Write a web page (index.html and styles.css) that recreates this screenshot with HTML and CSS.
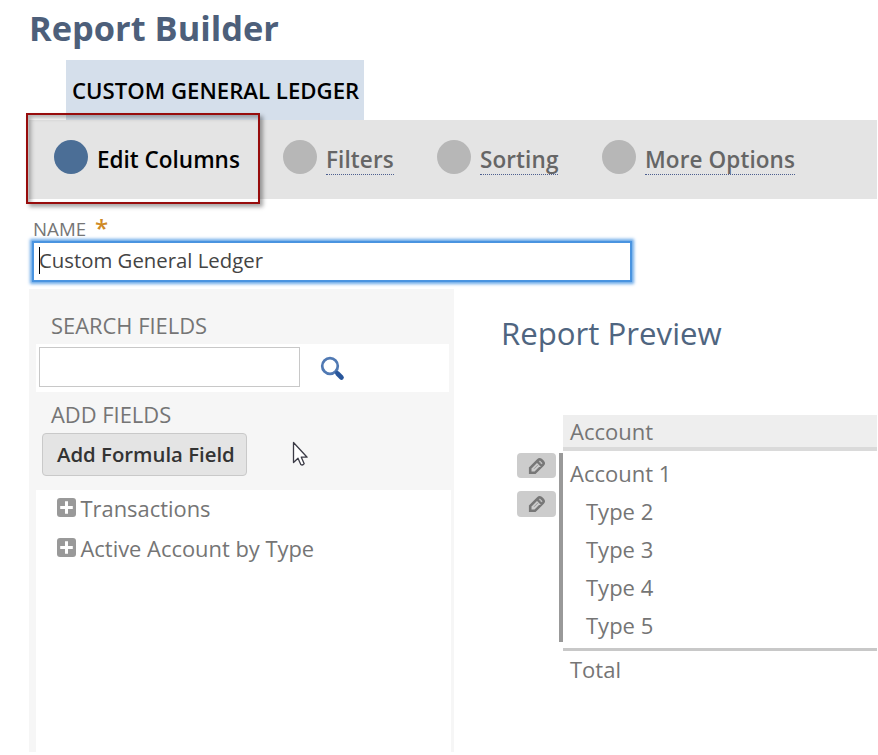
FILE: index.html
```html
<!DOCTYPE html>
<html lang="en">
<head>
<meta charset="utf-8">
<title>Report Builder</title>
<link rel="stylesheet" href="styles.css">
</head>
<body>
<svg class="defs" width="0" height="0">
  <symbol id="plus" viewBox="0 0 19 19"><rect width="19" height="19" rx="3" fill="#999"/><path d="M9.500 3.200v12.600M3.200 9.500h12.600" stroke="#fff" stroke-width="3"/></symbol>
  <symbol id="pencil" viewBox="0 0 18 18"><path d="M2.200 15.800v-4.800L10 3.200Q11.500 1.700 13 2.800L15.200 5Q16.300 6.300 14.900 7.900L7 15.800ZM9 4.200l4.900 4.900" fill="#ccc" stroke="#777" stroke-width="2.600"/><path d="M6 11.800l4-4M11.300 5l1.700 1.700" stroke="#999" stroke-width="1"/></symbol>
</svg>
<div class="page">
  <h1 class="title"><span>Report Builder</span></h1>
  <div class="tab"><span>CUSTOM GENERAL LEDGER</span></div>
  <nav class="steps">
    <div class="step active"><i></i><span>Edit Columns</span></div>
    <div class="step"><i></i><a>Filters</a></div>
    <div class="step"><i></i><a>Sorting</a></div>
    <div class="step"><i></i><a>More Options</a></div>
    <div class="callout"></div>
  </nav>
  <div class="name"><span>NAME</span><b>*</b></div>
  <div class="name-input"><span>Custom General Ledger</span></div>
  <main class="main">
    <section class="panel">
      <h3 class="search-label"><span>SEARCH FIELDS</span></h3>
      <div class="search">
        <div class="box"></div>
        <svg width="26" height="26" viewBox="0 0 26 26"><circle cx="10" cy="11" r="7.800" fill="#fff" stroke="#5079b3" stroke-width="2.700"/><path d="M15.500 16.500l1.500 1.500" stroke="#3d68a8" stroke-width="3"/><path d="M17.500 18.500l4 4" stroke="#28569b" stroke-width="4.600" stroke-linecap="round"/></svg>
      </div>
      <h3 class="add-label"><span>ADD FIELDS</span></h3>
      <div class="button"><span>Add Formula Field</span></div>
      <div class="list">
        <div class="item"><svg width="19" height="19"><use href="#plus"/></svg><span>Transactions</span></div>
        <div class="item"><svg width="19" height="19"><use href="#plus"/></svg><span>Active Account by Type</span></div>
      </div>
      <svg class="cursor" width="17" height="27" viewBox="0 0 17 27"><path d="M1.500 1.500v20l4.500-4.200 2.800 6.200q1.800 1.300 3.400-.8l-2.900-6.500h5.800Z" fill="#fff" stroke="#3b3b46" stroke-width="1.300" stroke-linejoin="round"/></svg>
    </section>
    <section class="preview">
      <h2><span>Report Preview</span></h2>
      <div class="grid">
        <div class="edits">
          <div class="edit"><svg width="18" height="18"><use href="#pencil"/></svg></div>
          <div class="edit second"><svg width="18" height="18"><use href="#pencil"/></svg></div>
        </div>
        <div class="rule"></div>
        <div class="table">
          <div class="head"><span>Account</span></div>
          <div class="row first"><span>Account 1</span></div>
          <div class="row type"><span>Type 2</span></div>
          <div class="row type"><span>Type 3</span></div>
          <div class="row type"><span>Type 4</span></div>
          <div class="row type"><span>Type 5</span></div>
          <div class="total"><span>Total</span></div>
        </div>
      </div>
    </section>
  </main>
</div>
</body>
</html>
```
FILE: styles.css
```css
* { box-sizing: border-box; }
body { margin: 0; background: #fff; font-family: "Open Sans", sans-serif; font-size: 22px; color: #757575; overflow: hidden; }
.defs { position: absolute; }
svg { display: block; flex: none; }
h1, h2, h3 { margin: 0; font-weight: 400; }
span, a { white-space: nowrap; }
.page { width: 877px; height: 752px; padding-left: 29px; overflow: hidden; }
.title { height: 60px; line-height: 56px; font-size: 34.400px; font-weight: 700; color: #4d5f7a; }
.tab { width: 298px; height: 60px; margin-left: 37px; padding-left: 6px; line-height: 61px; font-size: 22.200px; font-weight: 600; color: #000; background: #d5dfeb; }
.steps { position: relative; display: grid; grid-template-columns: 229px 154px 165px 1fr; height: 79px; padding: 20px 0 0 25px; background: #e4e4e4; }
.step { display: flex; align-items: flex-start; gap: 9px; font-size: 22.500px; font-weight: 600; color: #666; }
.step i { flex: none; width: 34px; height: 34px; border-radius: 50%; background: #b7b7b7; }
.step.active { color: #000; }
.step.active i { background: #4b6e96; }
.step span, .step a { margin-top: 3px; line-height: 33px; }
.step a { height: 32px; border-bottom: 1px dotted #4d5f8f; letter-spacing: .1px; }
.callout { position: absolute; left: -3px; top: -7px; width: 234px; height: 91px; border: 2px solid #970c0c; box-shadow: 3px 3px 4px rgba(0,0,0,.35), inset 3px 3px 4px rgba(0,0,0,.3); }
.name { display: flex; height: 42px; padding: 9px 0 0 4px; gap: 9px; line-height: 42px; font-size: 18.700px; }
.name b { font-size: 24px; font-weight: 600; line-height: 39px; color: #cf8a26; }
.name-input { width: 600px; height: 41px; margin-left: 3px; padding-left: 5px; border: 2px solid #4a94e0; box-shadow: 0 0 3px 2px #69a8e8; line-height: 35px; font-size: 20.350px; color: #444; }
.name-input::before { content: ""; display: inline-block; width: 1px; height: 27px; margin-right: -1px; vertical-align: -6px; background: #000; }
.main { display: flex; margin-top: 7px; height: 463px; }
.panel { position: relative; width: 425px; background: #f6f6f6; }
.search-label { height: 55px; padding: 18px 0 0 22px; line-height: 37px; font-size: 21.900px; }
.search { display: flex; align-items: center; gap: 20px; width: 413px; height: 48px; margin-left: 7px; padding-left: 3px; background: #fff; }
.box { width: 261px; height: 40px; margin-top: -2px; border: 1px solid #c8c8c8; background: #fff; }
.add-label { height: 41px; padding-left: 22px; line-height: 46px; font-size: 21.900px; }
.button { width: 205px; height: 43px; margin-left: 13px; padding-left: 14px; border: 1px solid #c9c9c9; border-radius: 4px; background: #e4e4e4; line-height: 41px; font-size: 20.350px; font-weight: 600; color: #333; }
.list { width: 415px; height: 262px; margin: 14px 0 0 7px; background: #fff; }
.item { display: flex; gap: 4.500px; height: 40px; padding: 8px 0 0 21px; line-height: 22px; font-size: 21.900px; }
.cursor { position: absolute; left: 263px; top: 152px; }
.preview { flex: 1; }
.preview h2 { height: 126px; padding: 23px 0 0 47px; line-height: 42px; font-size: 31.200px; color: #4f6580; }
.grid { display: grid; grid-template-columns: 40px 3px 4px 1fr; padding-left: 62px; }
.edits { grid-column: 1; padding-top: 38px; }
.edit { display: flex; align-items: center; justify-content: center; width: 39px; height: 25px; margin-left: 1px; border-radius: 4px; background: #ccc; }
.edit svg { margin-left: 1px; }
.second { margin-top: 13px; height: 26px; }
.rule { grid-column: 3; height: 189px; margin-top: 38px; background: #999; }
.head { height: 36px; padding-left: 7px; border-bottom: 4px solid #dadada; background: #eee; line-height: 32px; }
.row { height: 38px; padding-left: 7px; line-height: 36px; }
.first { height: 42px; line-height: 44px; }
.type { padding-left: 23px; }
.total { height: 50px; margin-top: 3px; padding-left: 7px; border-top: 3px solid #c8c8c8; line-height: 37px; }
```
